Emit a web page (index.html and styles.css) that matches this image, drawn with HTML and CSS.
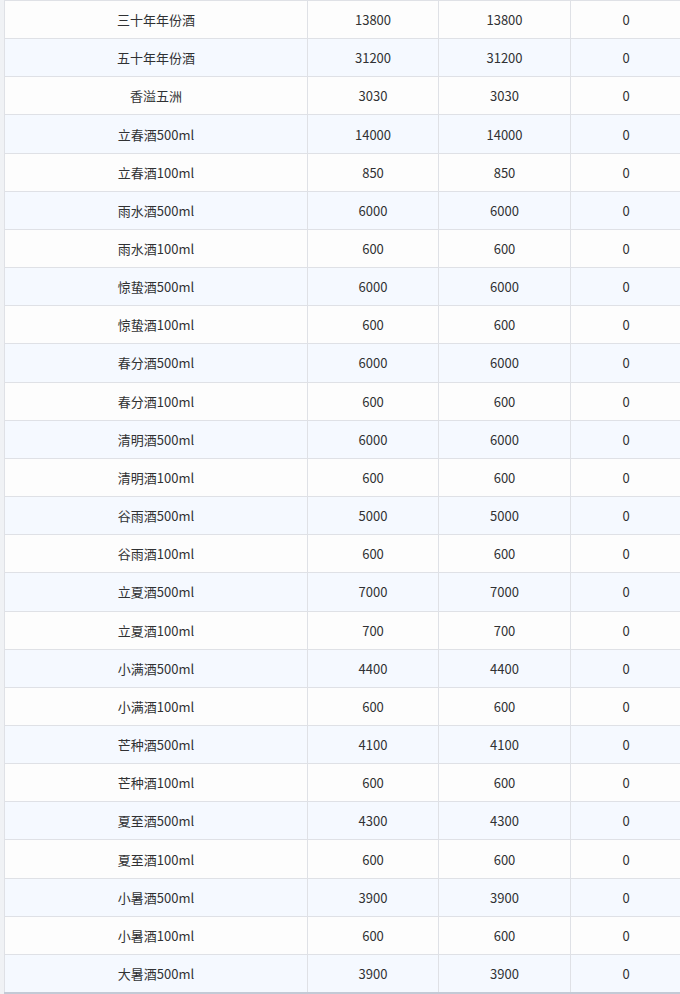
FILE: index.html
```html
<!DOCTYPE html>
<html lang="zh">
<head>
<meta charset="utf-8">
<link rel="stylesheet" href="styles.css">
</head>
<body>
<div class="wrap">
<table class="grid">
<colgroup><col class="c1"><col class="c2"><col class="c3"><col class="c4"></colgroup>
<tbody>
<tr><td>三十年年份酒</td><td>13800</td><td>13800</td><td>0</td></tr>
<tr><td>五十年年份酒</td><td>31200</td><td>31200</td><td>0</td></tr>
<tr><td>香溢五洲</td><td>3030</td><td>3030</td><td>0</td></tr>
<tr><td>立春酒500ml</td><td>14000</td><td>14000</td><td>0</td></tr>
<tr><td>立春酒100ml</td><td>850</td><td>850</td><td>0</td></tr>
<tr><td>雨水酒500ml</td><td>6000</td><td>6000</td><td>0</td></tr>
<tr><td>雨水酒100ml</td><td>600</td><td>600</td><td>0</td></tr>
<tr><td>惊蛰酒500ml</td><td>6000</td><td>6000</td><td>0</td></tr>
<tr><td>惊蛰酒100ml</td><td>600</td><td>600</td><td>0</td></tr>
<tr><td>春分酒500ml</td><td>6000</td><td>6000</td><td>0</td></tr>
<tr><td>春分酒100ml</td><td>600</td><td>600</td><td>0</td></tr>
<tr><td>清明酒500ml</td><td>6000</td><td>6000</td><td>0</td></tr>
<tr><td>清明酒100ml</td><td>600</td><td>600</td><td>0</td></tr>
<tr><td>谷雨酒500ml</td><td>5000</td><td>5000</td><td>0</td></tr>
<tr><td>谷雨酒100ml</td><td>600</td><td>600</td><td>0</td></tr>
<tr><td>立夏酒500ml</td><td>7000</td><td>7000</td><td>0</td></tr>
<tr><td>立夏酒100ml</td><td>700</td><td>700</td><td>0</td></tr>
<tr><td>小满酒500ml</td><td>4400</td><td>4400</td><td>0</td></tr>
<tr><td>小满酒100ml</td><td>600</td><td>600</td><td>0</td></tr>
<tr><td>芒种酒500ml</td><td>4100</td><td>4100</td><td>0</td></tr>
<tr><td>芒种酒100ml</td><td>600</td><td>600</td><td>0</td></tr>
<tr><td>夏至酒500ml</td><td>4300</td><td>4300</td><td>0</td></tr>
<tr><td>夏至酒100ml</td><td>600</td><td>600</td><td>0</td></tr>
<tr><td>小暑酒500ml</td><td>3900</td><td>3900</td><td>0</td></tr>
<tr><td>小暑酒100ml</td><td>600</td><td>600</td><td>0</td></tr>
<tr><td>大暑酒500ml</td><td>3900</td><td>3900</td><td>0</td></tr>
</tbody>
</table>
</div>
</body>
</html>
```

FILE: styles.css
```css
html, body {
  margin: 0;
  padding: 0;
  background: #ffffff;
}
.wrap {
  padding-left: 4px;
  width: 690px;
  overflow: hidden;
  height: 994px;
  background: #f0f2f5;
}
.grid {
  border-collapse: collapse;
  table-layout: fixed;
  width: 677px;
  font-family: "Noto Sans CJK SC", "Noto Sans", sans-serif;
  font-size: 13px;
  color: #303133;
  border-bottom: 2px solid #c3cad6;
}
.c1 { width: 303px; }
.c2 { width: 131px; }
.c3 { width: 132px; }
.c4 { width: 111px; }
.grid td {
  height: 37.16px;
  padding: 0;
  text-align: center;
  vertical-align: middle;
  border: 1px solid #dfe1e6;
  line-height: 1;
  background: #fdfdfd;
}
.grid tr:nth-child(even) td {
  background: #f5f9ff;
}
```
